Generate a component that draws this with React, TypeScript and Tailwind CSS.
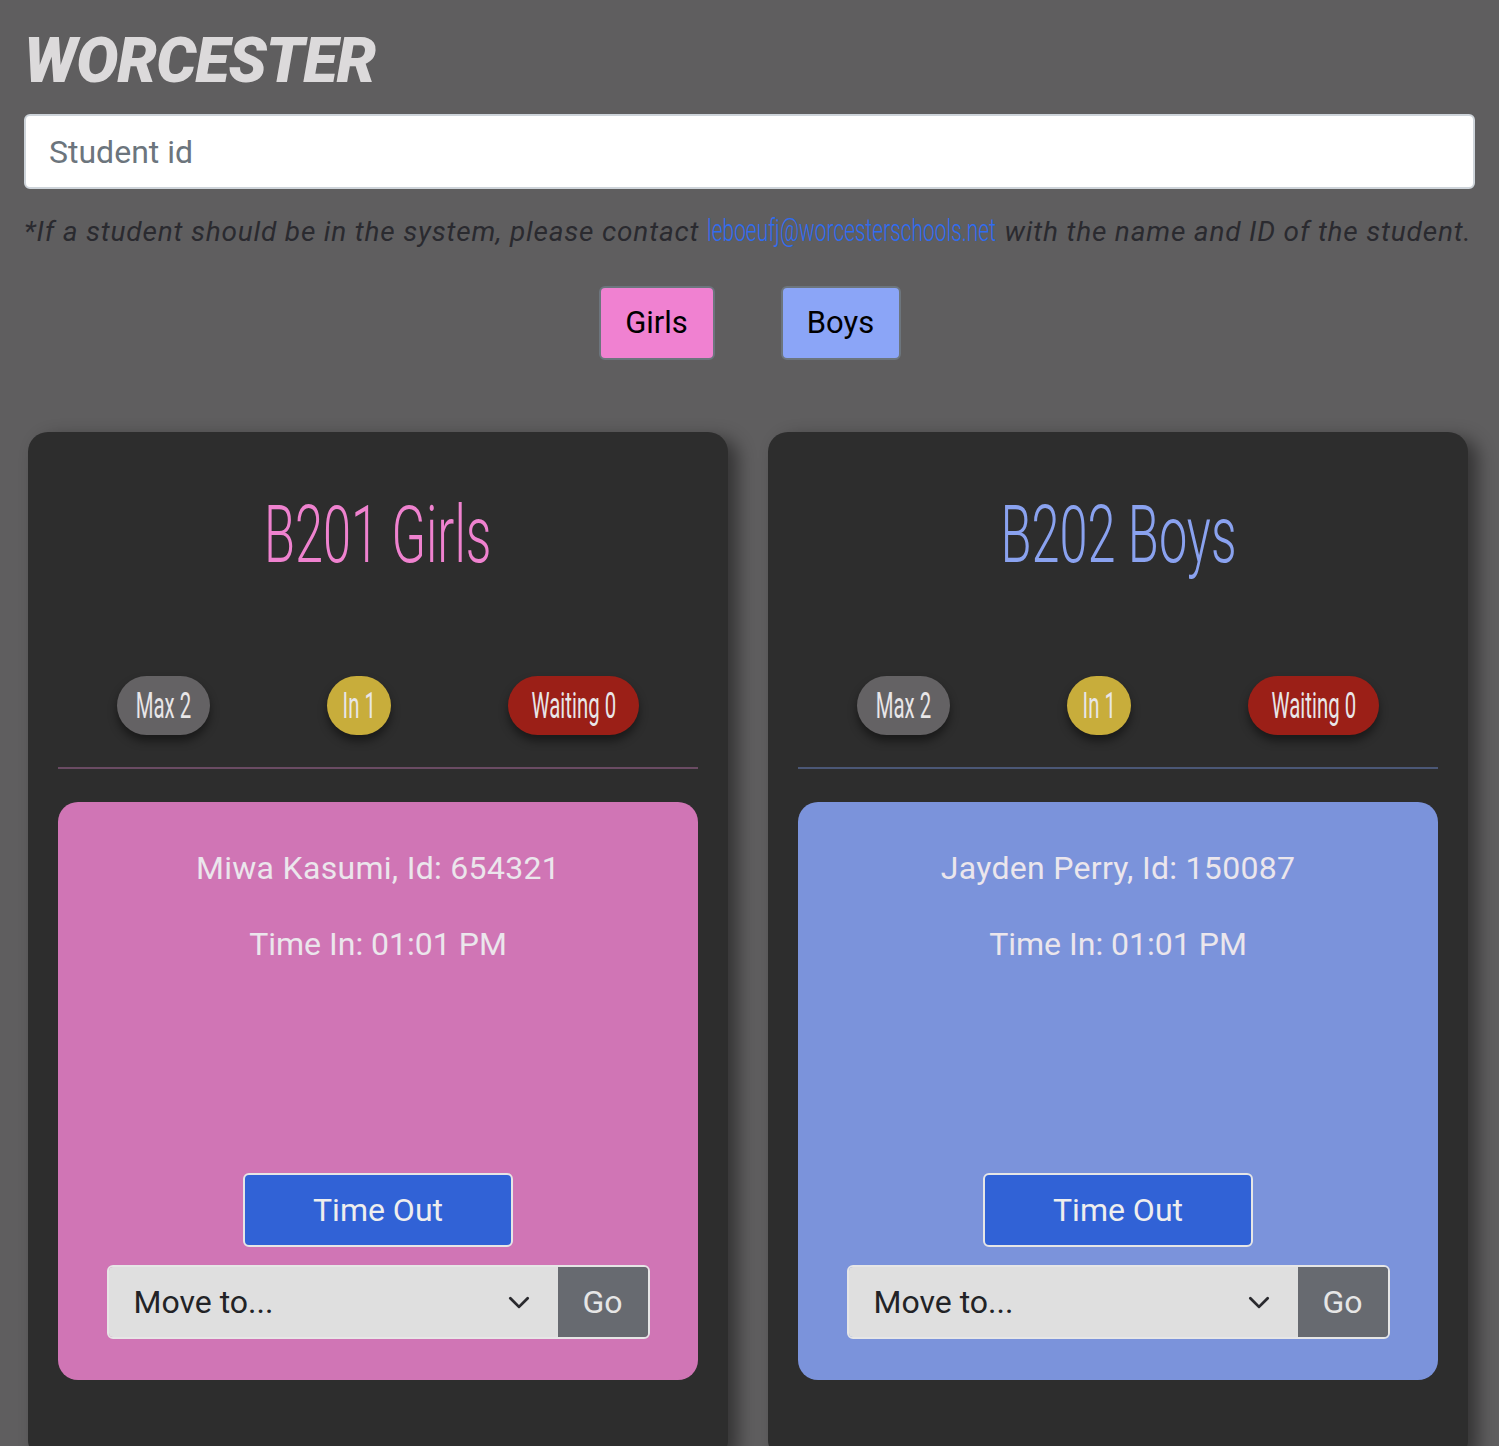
import React from 'react';

type Room = {
  name: string;
  titleColor: string;
  dividerColor: string;
  cardColor: string;
  student: string;
  timeIn: string;
};

const rooms: Room[] = [
  {
    name: 'B201 Girls',
    titleColor: 'text-[#ef82cf]',
    dividerColor: 'bg-[#6a4b63]',
    cardColor: 'bg-[#d075b5]',
    student: 'Miwa Kasumi, Id: 654321',
    timeIn: 'Time In: 01:01 PM',
  },
  {
    name: 'B202 Boys',
    titleColor: 'text-[#8aa2ef]',
    dividerColor: 'bg-[#4b5776]',
    cardColor: 'bg-[#7b93db]',
    student: 'Jayden Perry, Id: 150087',
    timeIn: 'Time In: 01:01 PM',
  },
];

const Badge: React.FC<{ label: string; width: string; color: string }> = ({ label, width, color }) => (
  <div
    className={`${width} ${color} h-[59px] rounded-full flex items-center justify-center shadow-[0_6px_10px_rgba(0,0,0,0.45)]`}
  >
    <span className="inline-block scale-x-[0.55] whitespace-nowrap text-[37px] leading-none text-[#e8e6e8]">
      {label}
    </span>
  </div>
);

const RoomCard: React.FC<{ room: Room }> = ({ room }) => (
  <div className="bg-[#2d2d2d] rounded-[20px] px-[30px] pt-[64px] pb-[80px] shadow-[10px_6px_18px_rgba(0,0,0,0.45)]">
    <div className="flex justify-center">
      <h2 className={`${room.titleColor} inline-block scale-x-[0.64] whitespace-nowrap text-[79px] leading-none font-light`}>
        {room.name}
      </h2>
    </div>

    <div className="mt-[101px] flex justify-around">
      <Badge label="Max 2" width="w-[93px]" color="bg-[#646264]" />
      <Badge label="In 1" width="w-[64px]" color="bg-[#c8ad3b]" />
      <Badge label="Waiting 0" width="w-[131px]" color="bg-[#9b1f17]" />
    </div>

    <div className={`${room.dividerColor} mt-[32px] h-[2px]`} />

    <div className={`${room.cardColor} mt-[33px] rounded-[20px] pt-[50px] pb-[41px] flex flex-col items-center text-[#ebe6ec]`}>
      <p className="text-[32px] leading-none tracking-[0.3px]">{room.student}</p>
      <p className="mt-[44px] text-[32px] leading-none">{room.timeIn}</p>

      <button className="mt-[213px] w-[270px] h-[74px] rounded-md bg-[#3162d6] border-2 border-[#e6e6e6] text-[32px] text-[#eeeeee]">
        Time Out
      </button>

      <div className="mt-[18px] w-[543px] h-[74px] flex rounded-md overflow-hidden border-2 border-[#e6e6e6]">
        <div className="flex-1 bg-[#dfdfdf] flex items-center justify-between pl-[25px] pr-[26px]">
          <span className="text-[32px] text-[#222326]">Move to...</span>
          <svg width="26" height="26" viewBox="0 0 24 24" fill="none" stroke="#2a2a2e" strokeWidth="2.6" strokeLinecap="round" strokeLinejoin="round">
            <path d="M4 8.5l8 8 8-8" />
          </svg>
        </div>
        <button className="w-[90px] bg-[#676a70] text-[32px] text-[#e6e6e6]">Go</button>
      </div>
    </div>
  </div>
);

const App: React.FC = () => {
  return (
    <div className="h-[1446px] overflow-hidden bg-[#5f5e5f] font-[Roboto,sans-serif]">
      <div className="pt-[29px] px-[24px]">
        <h1 className="text-[63px] leading-none font-black italic tracking-[-1px] text-[#dcdadb]">WORCESTER</h1>

        <input
          type="text"
          placeholder="Student id"
          className="mt-[22px] w-full h-[75px] rounded-md bg-white border-2 border-[#ced4da] px-[23px] text-[32px] text-[#212529] placeholder:text-[#6c757d] outline-none"
        />

        <p className="mt-[26px] flex items-baseline whitespace-nowrap text-[28px] leading-none italic tracking-[0.82px] text-[#2a2a2f]">
          <span>*If a student should be in the system, please contact&nbsp;</span>
          <a href="#" className="inline-block w-[290px] not-italic tracking-normal text-[#2f6cf2]">
            <span className="inline-block origin-left scale-x-[0.675] text-[31px] font-light">leboeufj@worcesterschools.net</span>
          </a>
          <span>&nbsp;with the name and ID of the student.</span>
        </p>

        <div className="mt-[40px] flex justify-center gap-[66px]">
          <button className="w-[116px] h-[74px] rounded-md bg-[#f081d1] border-2 border-[#6c757d] text-[31px] text-black">
            Girls
          </button>
          <button className="w-[120px] h-[74px] rounded-md bg-[#8ba5f7] border-2 border-[#6c757d] text-[31px] text-black">
            Boys
          </button>
        </div>
      </div>

      <div className="mt-[72px] grid grid-cols-2 gap-[40px] pl-[28px] pr-[31px]">
        {rooms.map(room => (
          <RoomCard key={room.name} room={room} />
        ))}
      </div>
    </div>
  );
};

export default App;
